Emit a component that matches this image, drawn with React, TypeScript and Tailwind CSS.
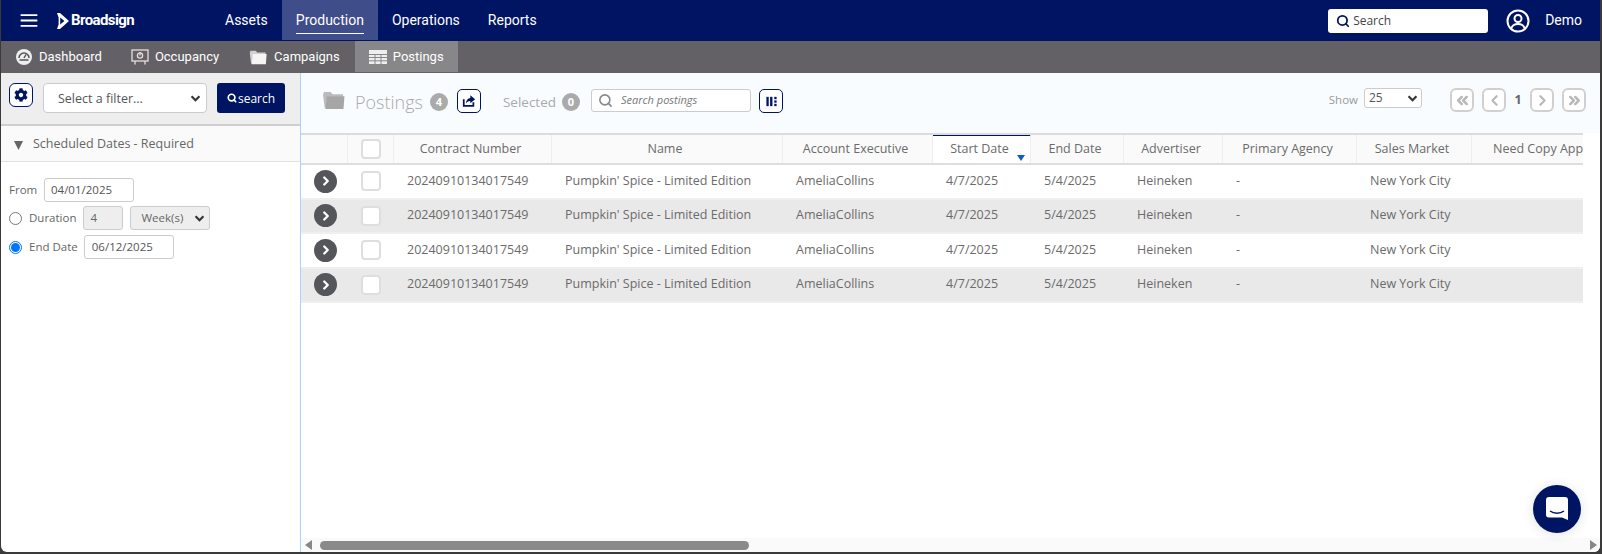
import React from "react";
import { Search, ChevronRight, ChevronLeft, ChevronsLeft, ChevronsRight } from "lucide-react";
import { FaCog } from "react-icons/fa";

function Folder({ className, fill }: { className: string; fill: string }) {
  return (
    <svg viewBox="0 0 24 21" className={className}>
      <path d="M2 2h7l2 2.500h11V7H5.500L4 19H2.800L1 5z" fill={fill} opacity="0.75" />
      <path d="M5 6.500h18.500L22.500 20H3.500z" fill={fill} />
    </svg>
  );
}

function OutlineBtn({ children, className = "" }: { children: React.ReactNode; className?: string }) {
  return (
    <button className={`flex h-6 w-6 items-center justify-center rounded-[5px] border border-[#001464] bg-white text-[#001464] ${className}`}>
      {children}
    </button>
  );
}

function PageBtn({ children }: { children: React.ReactNode }) {
  return (
    <span className="flex h-6 w-6 items-center justify-center rounded-[6px] border-2 border-[#d0d0d0] bg-white text-[#b8b8b8]">
      {children}
    </span>
  );
}

const Caret = ({ className = "" }: { className?: string }) => (
  <svg viewBox="0 0 12 8" className={`h-[7px] w-[11px] shrink-0 ${className}`}>
    <path d="M1.500 1.500 6 6l4.500-4.500" fill="none" stroke="#333" strokeWidth="2.400" />
  </svg>
);

const rowGrid = "grid grid-cols-[47px_46px_158px_231px_150px_98px_93px_99px_134px_115px_140px]";

const headers = ["Contract Number", "Name", "Account Executive", "Start Date", "End Date", "Advertiser", "Primary Agency", "Sales Market"];
const cells = ["20240910134017549", "Pumpkin' Spice - Limited Edition", "AmeliaCollins", "4/7/2025", "5/4/2025", "Heineken", "-", "New York City"];

function Row({ shaded }: { shaded: boolean }) {
  return (
    <div className={`${rowGrid} h-[34.5px] items-center border-b-2 border-[#efefef] ${shaded ? "bg-[#e9e9e9]" : "bg-white"}`}>
      <div className="flex justify-center pl-[2px]">
        <span className="flex h-[23px] w-[23px] items-center justify-center rounded-full bg-[#54565b] text-white">
          <ChevronRight size={14} strokeWidth={4} />
        </span>
      </div>
      <div className="flex justify-center">
        <span className="h-5 w-5 rounded-[4px] border-2 border-[#dedede] bg-white" />
      </div>
      {cells.map((c, i) => (
        <div key={i} className="whitespace-nowrap pl-[13px] text-[12.500px] text-[#6b6b6b]">{c}</div>
      ))}
    </div>
  );
}

export default function App() {
  return (
    <div className="h-[554px] w-[1602px] overflow-hidden bg-[#3a3a3a] pb-[2px] pl-px pr-[2px] font-['Open_Sans',sans-serif]">
      <div className="relative flex h-full flex-col overflow-hidden rounded-b-[6px] bg-white">
        {/* top navigation */}
        <header className="flex h-[41px] shrink-0 items-center bg-[#001464] font-['Roboto',sans-serif] text-white">
          <svg viewBox="0 0 18 14" className="ml-[19px] h-[13px] w-[18px]">
            <path d="M0 1.200h18M0 7h18M0 12.800h18" stroke="#fff" strokeWidth="2" />
          </svg>
          <div className="ml-[19px] flex w-[168px] items-center">
            <svg viewBox="0 0 12 16" className="h-[16px] w-[12px]">
              <path d="M0 0h3l9 8-9 8H0l1.600-4.500V4.500z M3.200 4.600v6.800L7.400 8z" fill="#fff" fillRule="evenodd" />
            </svg>
            <span className="ml-[2px] text-[15px] font-bold tracking-[-0.600px]">Broadsign</span>
          </div>
          <nav className="flex h-full items-stretch text-[14px]">
            <span className="flex items-center pr-[14px]">Assets</span>
            <span className="mb-[1px] flex flex-col items-center justify-center bg-[#3f4d8b] px-[14px]">
              <span className="border-b border-white pb-[2px] pt-[3px]">Production</span>
            </span>
            <span className="flex items-center px-[14px]">Operations</span>
            <span className="flex items-center px-[14px]">Reports</span>
          </nav>
          <div className="ml-auto flex h-6 w-40 items-center gap-[3px] rounded-[3px] bg-white pl-2 font-['Open_Sans',sans-serif] text-[12px] text-[#444]">
            <Search size={14} strokeWidth={3} className="text-[#001464]" />
            Search
          </div>
          <svg viewBox="0 0 24 24" className="ml-[18px] h-6 w-6" fill="none" stroke="#fff" strokeWidth="2">
            <circle cx="12" cy="12" r="10.500" />
            <circle cx="12" cy="9.500" r="3.500" />
            <path d="M5.500 19c1-3 3.500-4 6.500-4s5.500 1 6.500 4" />
          </svg>
          <span className="ml-[15px] mr-[18px] text-[14px]">Demo</span>
        </header>

        {/* secondary navigation */}
        <div className="flex h-8 shrink-0 items-stretch bg-[#636166] font-['Roboto',sans-serif] text-[13px] text-white">
          <span className="flex items-center pl-[15px]">
            <svg viewBox="0 0 16 16" className="h-4 w-4">
              <circle cx="8" cy="8" r="8" fill="#eee" />
              <path d="M3 9a5 5 0 0 1 10 0" fill="none" stroke="#555" strokeWidth="1.600" />
              <path d="M8 9 10 5.500" stroke="#555" strokeWidth="1.500" />
              <path d="M3.500 11h9" stroke="#555" strokeWidth="1.500" />
            </svg>
            <span className="ml-[7px]">Dashboard</span>
          </span>
          <span className="ml-[29px] flex items-center">
            <svg viewBox="0 0 18 16" className="h-4 w-[18px]" fill="none" stroke="#e8dcdc" strokeWidth="1.300">
              <rect x="1" y="1" width="16" height="11" />
              <circle cx="9" cy="6.500" r="2.600" />
              <path d="M4 12v3.500M14 12v3.500M9 3v3.500" />
            </svg>
            <span className="ml-[6px]">Occupancy</span>
          </span>
          <span className="ml-[30px] flex items-center">
            <Folder className="h-[16px] w-[18px]" fill="#f5f5f5" />
            <span className="ml-[7px]">Campaigns</span>
          </span>
          <span className="ml-[15px] mb-[1px] flex w-[103px] items-center bg-[#878689] pl-[14px]">
            <svg viewBox="0 0 18 14" className="h-[14px] w-[18px]">
              <rect x="0" y="0" width="18" height="14" fill="#eee" />
              <path d="M0 4.500h18M0 7.500h18M0 10.800h18M6 4.500V14M12 4.500V14" stroke="#878689" strokeWidth="1" />
            </svg>
            <span className="ml-[6px]">Postings</span>
          </span>
        </div>

        <div className="flex min-h-0 flex-1">
          {/* sidebar */}
          <aside className="flex w-[299px] shrink-0 flex-col text-[11.500px] text-[#666]">
            <div className="flex h-[53px] shrink-0 items-start gap-[10px] border-b-2 border-[#cfcfcf] bg-[#eeeeee] pl-[8px] pt-[10px]">
              <OutlineBtn className="rounded-[6px]"><FaCog size={14} /></OutlineBtn>
              <div className="flex h-[30px] w-[164px] items-center justify-between rounded-[4px] border border-[#ccc] bg-white pl-[14px] pr-[5px] text-[12.500px] text-[#555]">
                <span className="pt-[3px]">Select a filter...</span>
                <Caret />
              </div>
              <button className="flex h-[30px] w-[68px] items-center justify-center gap-[1px] rounded-[3px] bg-[#001464] text-[12px] text-white">
                <Search size={10} strokeWidth={4} />
                <span className="pt-[2px]">search</span>
              </button>
            </div>
            <div className="flex h-[36px] shrink-0 items-center border-b border-[#e2e2e2] bg-[#fafafa] pl-[13px] text-[12.500px] text-[#666]">
              <svg viewBox="0 0 8 8" className="mt-[3px] h-[9px] w-[9px]"><path d="M0 0h8L4 8z" fill="#666" /></svg>
              <span className="ml-[10px] pt-[2px]">Scheduled Dates - Required</span>
            </div>
            <div className="flex flex-col pl-[8px] pt-[16px]">
              <div className="flex h-6 items-center">
                <span className="w-[35px] pb-[1px]">From</span>
                <span className="flex h-6 w-[90px] items-center rounded-[3px] border border-[#ccc] pl-[6px] text-[#555]">04/01/2025</span>
              </div>
              <div className="mt-[4px] flex h-6 items-center">
                <span className="h-[13px] w-[13px] rounded-full border border-[#777] bg-white" />
                <span className="ml-[7px]">Duration</span>
                <span className="ml-[7px] flex h-6 w-10 items-center rounded-[3px] border border-[#ccc] bg-[#eee] pl-[6px]">4</span>
                <span className="ml-[7px] flex h-6 w-[80px] items-center justify-between rounded-[3px] border border-[#ccc] bg-[#eee] pl-[10px] pr-[4px]">Week(s)<Caret /></span>
              </div>
              <div className="mt-[5px] flex h-6 items-center">
                <span className="flex h-[13px] w-[13px] items-center justify-center rounded-full border border-[#0075ff] bg-white">
                  <span className="h-[9px] w-[9px] rounded-full bg-[#0075ff]" />
                </span>
                <span className="ml-[7px]">End Date</span>
                <span className="ml-[6px] flex h-6 w-[90px] items-center rounded-[3px] border border-[#ccc] pl-[7px] text-[#555]">06/12/2025</span>
              </div>
            </div>
          </aside>

          {/* main */}
          <main className="flex min-w-0 flex-1 flex-col border-l border-[#a9d3fa]">
            <div className="flex h-[60px] shrink-0 items-start bg-[#f8fcff] pl-[20px] pr-[14px] pt-[15px] text-[#999]">
              <Folder className="mt-[2px] h-[20px] w-[25px]" fill="#a6a6a6" />
              <span className="ml-[9px] mt-[1px] text-[18px] font-light leading-[26px] text-[#aaa]">Postings</span>
              <span className="ml-[7px] mt-[5px] flex h-[18px] w-[18px] items-center justify-center rounded-full bg-[#aaa] text-[11px] font-bold text-white">4</span>
              <OutlineBtn className="ml-[9px] mt-[1px]">
                <svg viewBox="0 0 16 16" className="h-[14px] w-[14px]">
                  <path d="M2 6v7.500h11V9.500" fill="none" stroke="#001464" strokeWidth="2" />
                  <path d="M9.500 1.500 15 6l-5.500 4.500V8C7 8 5.500 9 4.500 11c0-4 2-6 5-6.500z" fill="#001464" />
                </svg>
              </OutlineBtn>
              <span className="ml-[22px] mt-[3px] text-[13.500px] leading-[22px] text-[#aaa]">Selected</span>
              <span className="ml-[6px] mt-[5px] flex h-[18px] w-[18px] items-center justify-center rounded-full bg-[#aaa] text-[11px] font-bold text-white">0</span>
              <div className="ml-[11px] mt-[1px] flex h-[23px] w-40 items-center rounded-[3px] border border-[#ccc] bg-white pl-[6px] text-[11px] italic text-[#777]">
                <Search size={15} strokeWidth={2.500} className="text-[#888]" />
                <span className="ml-[8px]">Search postings</span>
              </div>
              <OutlineBtn className="ml-[8px] mt-[1px]">
                <svg viewBox="0 0 14 14" className="h-[13px] w-[13px]" fill="#001464">
                  <rect x="1.500" y="2" width="2.500" height="10" />
                  <rect x="5.500" y="2" width="2.500" height="10" />
                  <rect x="10" y="2" width="2.500" height="2.500" />
                  <rect x="10" y="5.800" width="2.500" height="2.500" />
                  <rect x="10" y="9.500" width="2.500" height="2.500" />
                </svg>
              </OutlineBtn>
              <span className="ml-auto mt-[2px] text-[11.500px] leading-[20px]">Show</span>
              <div className="ml-[6px] flex h-5 w-[58px] items-center justify-between rounded-[3px] border border-[#ccc] bg-white pl-[4px] pr-[3px] text-[12px] text-[#555]">25<Caret /></div>
              <div className="ml-[28px] flex items-center text-[#666]">
                <PageBtn><ChevronsLeft size={17} strokeWidth={3.500} /></PageBtn>
                <span className="ml-2"><PageBtn><ChevronLeft size={17} strokeWidth={3} /></PageBtn></span>
                <span className="flex w-6 justify-center text-[12.500px] font-bold">1</span>
                <PageBtn><ChevronRight size={17} strokeWidth={3} /></PageBtn>
                <span className="ml-2"><PageBtn><ChevronsRight size={17} strokeWidth={3.500} /></PageBtn></span>
              </div>
            </div>

            <div className="mr-[17px] min-h-0 flex-1 overflow-hidden border-t-2 border-[#dcdcdc] bg-white">
              <div className="w-[1311px]">
                <div className={`${rowGrid} h-[30px] items-stretch border-b-2 border-[#dedede] bg-[#fafafa] text-center text-[12.500px] text-[#6b6b6b]`}>
                  <div className="border-r border-[#eee]" />
                  <div className="flex items-center justify-center border-r border-[#eee]">
                    <span className="h-5 w-5 rounded-[4px] border-2 border-[#dedede] bg-white" />
                  </div>
                  {headers.map((h) => (
                    <div
                      key={h}
                      className={`relative flex items-center justify-center whitespace-nowrap border-r border-[#eee] pr-[4px] ${h === "Start Date" ? "-mt-[2px] border-t-[3px] border-t-[#001464] bg-white" : ""}`}
                    >
                      {h}
                      {h === "Start Date" && <span className="absolute bottom-[2px] right-[5px] h-0 w-0 border-x-[4px] border-t-[6px] border-x-transparent border-t-[#0a5fc4]" />}
                    </div>
                  ))}
                  <div className="flex items-center whitespace-nowrap pl-[21px]">Need Copy App</div>
                </div>
                {[false, true, false, true].map((s, i) => <Row key={i} shaded={s} />)}
              </div>
            </div>

            {/* horizontal scrollbar */}
            <div className="mt-auto flex h-[14px] shrink-0 items-center bg-[#fafafa] pl-[4px] pr-[3px]">
              <span className="h-0 w-0 border-y-[5px] border-r-[7px] border-y-transparent border-r-[#888]" />
              <span className="ml-[8px] h-[9px] w-[429px] rounded-full bg-[#8a8a8a]" />
              <span className="ml-auto h-0 w-0 border-y-[5px] border-l-[7px] border-y-transparent border-l-[#888]" />
            </div>
          </main>
        </div>

        {/* chat launcher */}
        <button className="absolute left-[1532px] top-[485px] flex h-12 w-12 items-center justify-center rounded-full bg-[#001464] shadow-[0_1px_12px_rgba(0,0,0,0.12)]">
          <svg viewBox="0 0 22 24" className="h-6 w-[22px]">
            <path d="M3 0h16a3 3 0 0 1 3 3v20l-6-2.500H3a3 3 0 0 1-3-3V3a3 3 0 0 1 3-3z" fill="#fff" />
            <path d="M4 14c4 3 10 3 14 0" fill="none" stroke="#001464" strokeWidth="1.500" />
          </svg>
        </button>
      </div>
    </div>
  );
}
